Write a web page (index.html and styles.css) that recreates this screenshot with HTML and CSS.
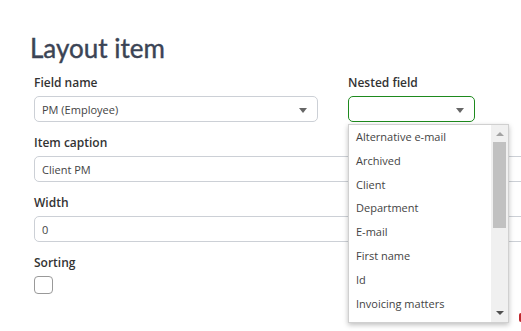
FILE: index.html
```html
<!DOCTYPE html>
<html lang="en">
<head>
    <meta charset="UTF-8">
    <meta name="viewport" content="width=device-width, initial-scale=1.0">
    <title>Layout item</title>
    <link rel="stylesheet" href="styles.css">
</head>
<body>
    <div class="page">
        <h1>Layout item</h1>
        <div class="row">
            <div class="field field-main">
                <label class="field-label">Field name</label>
                <div class="select">
                    <span>PM (Employee)</span>
                    <span class="caret"></span>
                </div>
            </div>
            <div class="field field-nested">
                <label class="field-label">Nested field</label>
                <div class="select select-active">
                    <span></span>
                    <span class="caret"></span>
                </div>
                <div class="dropdown">
                    <ul class="options">
                        <li>Alternative e-mail</li>
                        <li>Archived</li>
                        <li>Client</li>
                        <li>Department</li>
                        <li>E-mail</li>
                        <li>First name</li>
                        <li>Id</li>
                        <li>Invoicing matters</li>
                    </ul>
                    <div class="scrollbar">
                        <span class="arrow arrow-up"></span>
                        <span class="thumb"></span>
                        <span class="arrow arrow-down"></span>
                    </div>
                </div>
            </div>
        </div>
        <div class="field">
            <label class="field-label">Item caption</label>
            <div class="input">Client PM</div>
        </div>
        <div class="field">
            <label class="field-label">Width</label>
            <div class="input">0</div>
        </div>
        <div class="field">
            <label class="field-label">Sorting</label>
            <div class="checkbox"></div>
        </div>
    </div>
    <span class="edge-mark"></span>
</body>
</html>
```

FILE: styles.css
```css
body {
    margin: 0;
    padding: 0;
    font-family: "Open Sans", "Noto Sans", Arial, sans-serif;
    background-color: white;
    color: #333;
    overflow: hidden;
    height: 331px;
    position: relative;
}
.page {
    width: 640px;
    padding: 32px 0 0 34px;
}
h1 {
    margin: 0 0 11px -4px;
    font-family: Lato, "Open Sans", sans-serif;
    font-size: 26px;
    font-weight: 400;
    color: #3b4455;
    line-height: 32px;
    -webkit-text-stroke: 0.4px #3b4455;
}
.row {
    display: flex;
    gap: 30px;
}
.field {
    position: relative;
    margin-bottom: 13px;
}
.field-main {
    width: 284px;
}
.field-nested {
    width: 127px;
}
.field-label {
    display: block;
    font-size: 12px;
    font-weight: 600;
    color: #333;
    line-height: 15px;
    margin-bottom: 6px;
}
.select, .input {
    box-sizing: border-box;
    height: 26px;
    border: 1px solid #ccd0d6;
    border-radius: 5px;
    font-size: 11px;
    color: #444;
    padding: 0 7px;
    display: flex;
    align-items: center;
    justify-content: space-between;
}
.select-active {
    border-color: #1e8a1e;
}
.caret {
    width: 0;
    height: 0;
    border-left: 4px solid transparent;
    border-right: 4px solid transparent;
    border-top: 5px solid #666;
    margin: 3px 3px 0 0;
}
.checkbox {
    width: 17px;
    height: 16px;
    border: 1px solid #999;
    border-radius: 4px;
}
.dropdown {
    position: absolute;
    top: 49px;
    left: 0;
    width: 161px;
    height: 199px;
    box-sizing: border-box;
    background: white;
    border: 1px solid #d0d0d0;
    box-shadow: 0 2px 5px rgba(0, 0, 0, 0.25);
    display: flex;
    z-index: 2;
}
.options {
    list-style: none;
    margin: 0;
    padding: 0;
    flex: 1;
}
.options li {
    font-size: 11px;
    color: #444;
    height: 23.8px;
    line-height: 23px;
    padding-left: 7px;
}
.scrollbar {
    width: 17px;
    background: #f0f0f0;
    display: flex;
    flex-direction: column;
    align-items: center;
}
.arrow {
    width: 0;
    height: 0;
    border-left: 4px solid transparent;
    border-right: 4px solid transparent;
}
.arrow-up {
    border-bottom: 4px solid #a3a3a3;
    margin-top: 7px;
}
.arrow-down {
    border-top: 4px solid #505050;
    margin-top: auto;
    margin-bottom: 7px;
}
.thumb {
    width: 13px;
    height: 86px;
    background: #c1c1c1;
    margin-top: 6px;
}
.edge-mark {
    position: absolute;
    left: 519px;
    top: 313px;
    width: 2px;
    height: 9px;
    background: #c0282e;
    border-radius: 2px 0 0 2px;
}
```
